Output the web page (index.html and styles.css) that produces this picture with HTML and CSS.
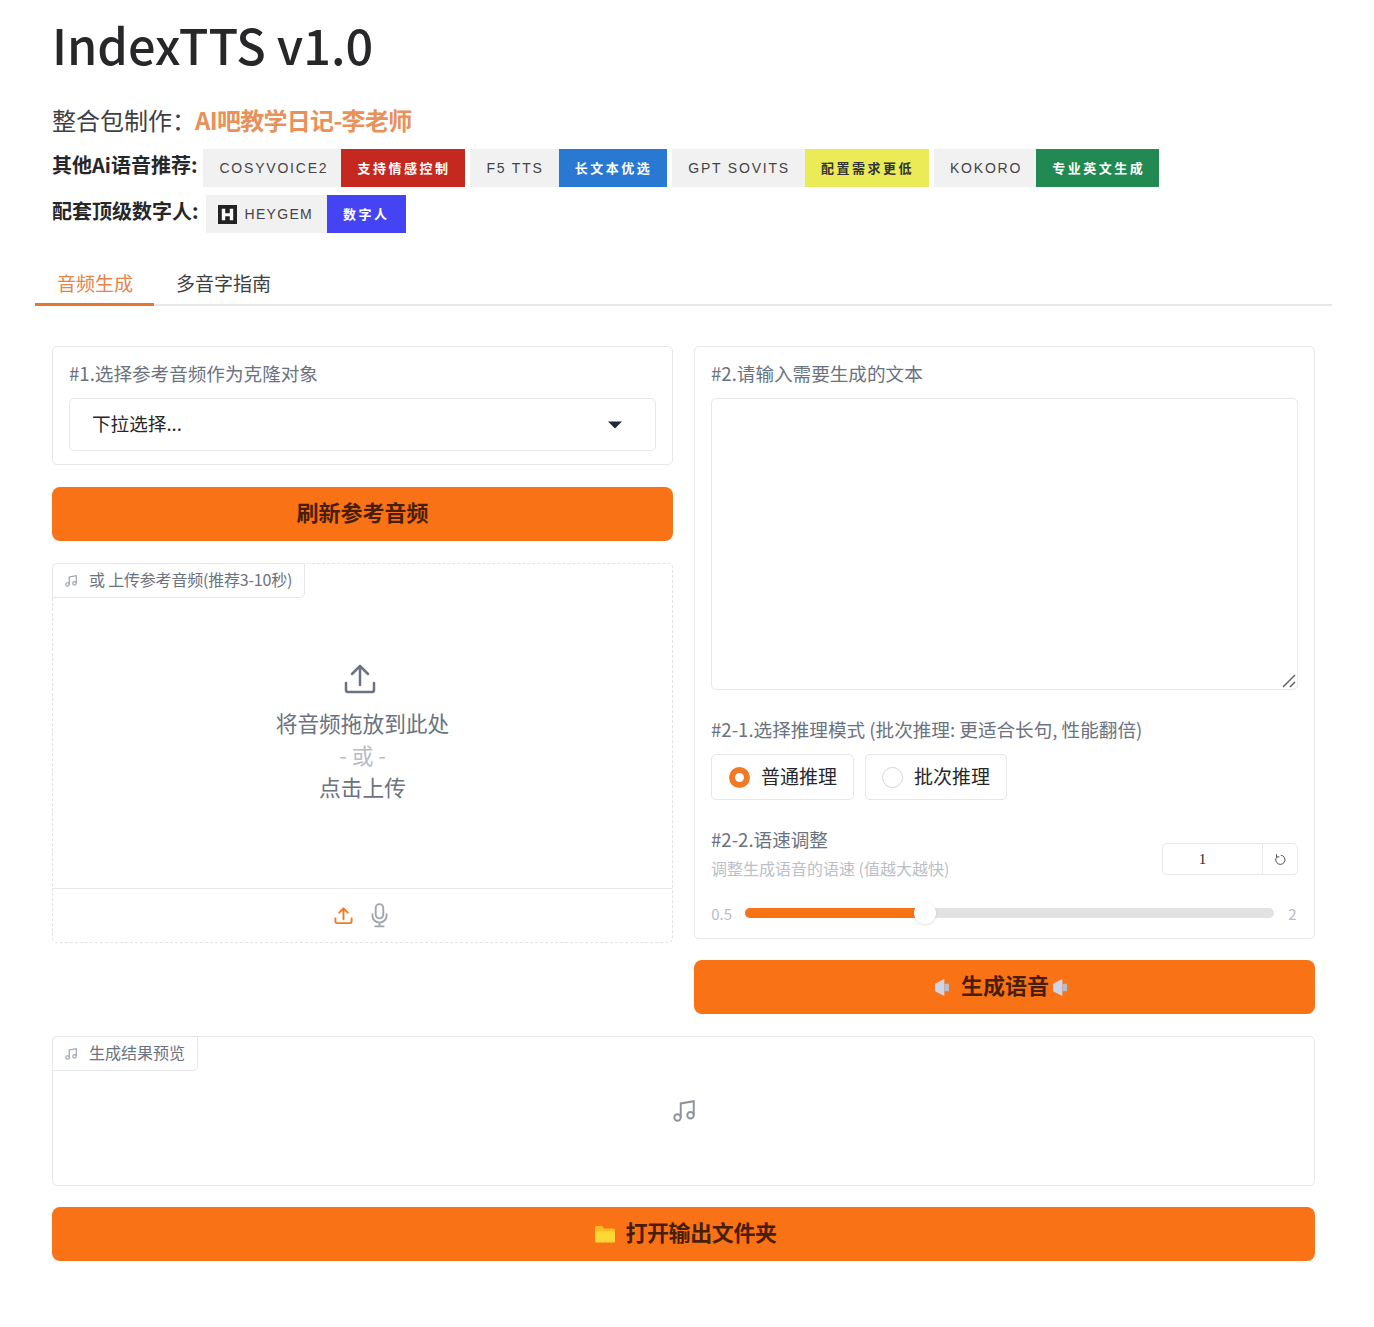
FILE: index.html
```html
<!DOCTYPE html>
<html lang="en">
<head>
  <meta charset="UTF-8">
  <title>IndexTTS v1.0</title>
  <link rel="stylesheet" href="styles.css">
</head>
<body>
  <div id="app">
    <!-- Header -->
    <header class="intro">
      <h1>IndexTTS v1.0</h1>
      <div class="maker">整合包制作：<b>AI吧教学日记-李老师</b></div>
      <div class="badge-row row-one">
        <strong>其他Ai语音推荐:</strong>
        <span class="badge"><span class="badge-name name-cosy">COSYVOICE2</span><span class="badge-tag tag-red">支持情感控制</span></span>
        <span class="badge"><span class="badge-name name-wide">F5 TTS</span><span class="badge-tag tag-blue">长文本优选</span></span>
        <span class="badge"><span class="badge-name name-wide">GPT SOVITS</span><span class="badge-tag tag-yellow">配置需求更低</span></span>
        <span class="badge"><span class="badge-name">KOKORO</span><span class="badge-tag tag-green">专业英文生成</span></span>
      </div>
      <div class="badge-row row-two">
        <strong>配套顶级数字人:</strong>
        <span class="badge">
          <span class="badge-name has-logo">
            <svg class="logo" viewBox="0 0 20 20"><path fill="#222" d="M0 0h20v20H0z"/><path fill="#fff" d="M4 4h3.600v4.600h4.800V4H16v12h-3.600v-4.200H7.600V16H4z"/></svg>
            HEYGEM
          </span>
          <span class="badge-tag tag-indigo">数字人</span>
        </span>
      </div>
    </header>

    <!-- Tabs -->
    <nav class="tabs">
      <a class="tab active">音频生成</a>
      <a class="tab">多音字指南</a>
    </nav>

    <main class="content">
      <div class="columns">
        <section class="col">
          <div class="panel select-panel">
            <label class="field-label">#1.选择参考音频作为克隆对象</label>
            <div class="select-box">
              <span>下拉选择...</span>
              <svg class="caret" viewBox="0 0 14 8"><path fill="#1f2937" d="M0 .5h14L7 7.500z"/></svg>
            </div>
          </div>

          <button class="primary-btn">刷新参考音频</button>

          <div class="upload">
            <div class="block-tag upload-tag">
              <svg class="tag-icon" viewBox="0 0 24 24"><path d="M9 18V5l12-2v13"/><circle cx="6" cy="18" r="3"/><circle cx="18" cy="16" r="3"/></svg>
              或 上传参考音频(推荐3-10秒)
            </div>
            <div class="drop-area">
              <svg class="drop-icon" viewBox="0 0 32 32"><path d="M16 22V4M8 11l8-8 8 8M2 20v7a2 2 0 0 0 2 2h24a2 2 0 0 0 2-2v-7"/></svg>
              <div class="drop-line">将音频拖放到此处</div>
              <div class="drop-or">- 或 -</div>
              <div class="drop-line">点击上传</div>
            </div>
            <div class="source-bar">
              <svg class="src-icon upload-src" viewBox="0 0 20 20"><path d="M10 14V2.500M5.500 7L10 2.500 14.500 7M1.500 13v3.500a1.500 1.500 0 0 0 1.500 1.500h14a1.500 1.500 0 0 0 1.500-1.500V13"/></svg>
              <svg class="src-icon mic-src" viewBox="0 0 18 26"><rect x="5" y="1" width="8" height="15" rx="4"/><path d="M1.500 11.500v1.500a7.500 7.500 0 0 0 15 0v-1.500M9 20.500V24.500M4.500 24.500h9"/></svg>
            </div>
          </div>
        </section>

        <section class="col">
          <div class="panel text-panel">
            <label class="field-label">#2.请输入需要生成的文本</label>
            <div class="text-wrap">
              <textarea class="text-input"></textarea>
              <svg class="grip" viewBox="0 0 14 14"><path d="M1 13L13 1M8 13l5-5"/></svg>
            </div>

            <label class="field-label mode-label">#2-1.选择推理模式 (批次推理: 更适合长句, 性能翻倍)</label>
            <div class="radios">
              <label class="radio checked"><i></i>普通推理</label>
              <label class="radio"><i></i>批次推理</label>
            </div>

            <div class="speed-head">
              <div>
                <div class="speed-title">#2-2.语速调整</div>
                <div class="speed-info">调整生成语音的语速 (值越大越快)</div>
              </div>
              <div class="number-box">
                <span class="number-value">1</span>
                <span class="number-reset">
                  <svg viewBox="0 0 13 13"><path d="M6.800 2.200A4.600 4.600 0 1 1 2.700 4M2.500 1.200L2.700 4l2.700-.2"/></svg>
                </span>
              </div>
            </div>

            <div class="slider-row">
              <span class="min">0.5</span>
              <div class="track">
                <div class="fill" style="width: 34%"></div>
                <div class="thumb" style="left: 34%"></div>
              </div>
              <span class="max">2</span>
            </div>
          </div>

          <button class="primary-btn speak-btn">
            <svg class="speaker speaker-left" viewBox="0 0 15 18"><path d="M0 5l10-5v18L0 13z"/><path class="speaker-back" d="M10 5h5v8h-5z"/></svg>
            生成语音
            <svg class="speaker speaker-right" viewBox="0 0 15 18"><path d="M0 5l10-5v18L0 13z"/><path class="speaker-back" d="M10 5h5v8h-5z"/></svg>
          </button>
        </section>
      </div>

      <div class="result">
        <div class="block-tag">
          <svg class="tag-icon" viewBox="0 0 24 24"><path d="M9 18V5l12-2v13"/><circle cx="6" cy="18" r="3"/><circle cx="18" cy="16" r="3"/></svg>
          生成结果预览
        </div>
        <svg class="result-icon" viewBox="0 0 24 24"><path d="M9 18V5l12-2v13"/><circle cx="6" cy="18" r="3"/><circle cx="18" cy="16" r="3"/></svg>
      </div>

      <button class="primary-btn folder-btn">
        <svg class="folder" viewBox="0 0 22 18"><path fill="#fbbf24" d="M1 2.500A1.500 1.500 0 0 1 2.500 1h5.200l2.300 2.500h9.500A1.500 1.500 0 0 1 21 5v4H1z"/><path fill="#fdd835" d="M1 6.500h20V16a1.500 1.500 0 0 1-1.500 1.500h-17A1.500 1.500 0 0 1 1 16z"/></svg>
        打开输出文件夹
      </button>
    </main>
  </div>
</body>
</html>
```

FILE: styles.css
```css
* {
  box-sizing: border-box;
}

body {
  margin: 0;
  background: #fff;
  font-family: "Noto Sans CJK SC", "Noto Sans", sans-serif;
  color: #27272a;
}

#app {
  width: 1297px;
  margin-left: 35px;
  padding-bottom: 66px;
}

/* header */
.intro {
  padding: 0 17px;
}

h1 {
  margin: 0;
  padding-top: 12px;
  font-size: 48.6px;
  line-height: 64px;
  font-weight: 500;
  color: #27272a;
}

.maker {
  margin-top: 22px;
  height: 44px;
  font-size: 24px;
  line-height: 44px;
  color: #3f3f46;
}

.maker b {
  margin-left: -1px;
  color: #e8915a;
  font-weight: 700;
  letter-spacing: -0.7px;
}

.badge-row {
  display: flex;
  align-items: flex-start;
  height: 38px;
}

.badge-row strong {
  font-size: 20px;
  line-height: 32px;
  color: #27272a;
}

.row-one {
  margin-top: 7px;
  gap: 5px;
}

.row-one strong {
  margin-right: 1px;
}

.row-two {
  margin-top: 8px;
  gap: 5px;
}

.row-two strong {
  margin-right: 2px;
}

.badge {
  display: flex;
  height: 38px;
  font-size: 13px;
  line-height: 38px;
  letter-spacing: 2.5px;
}

.badge-name {
  padding: 0 14px 0 16px;
  background: #f1f1f1;
  color: #444;
  font-family: "Liberation Sans", sans-serif;
  font-size: 14px;
  letter-spacing: 1.8px;
  white-space: nowrap;
}

.name-cosy {
  padding-right: 13px;
}

.name-wide {
  padding-right: 15px;
}

.has-logo {
  display: flex;
  align-items: center;
  gap: 8px;
  padding-left: 12px;
  letter-spacing: 1.3px;
}

.logo {
  width: 19px;
  height: 19px;
}

.badge-tag {
  padding: 0 15px 0 16px;
  font-weight: 700;
  color: #fff;
  white-space: nowrap;
}

.tag-red { background: #c5281f; }
.tag-blue { background: #2979d2; }
.tag-yellow { background: #eaeb56; color: #333; }
.tag-green { background: #218a52; padding-right: 14px; }
.tag-indigo { background: #4444f4; padding-right: 16px; }

/* tabs */
.tabs {
  display: flex;
  margin-top: 27px;
  height: 46px;
  border-bottom: 2px solid #e5e7eb;
}

.tab {
  padding: 0 22px;
  font-size: 19px;
  line-height: 46px;
  color: #3f3f46;
}

.tab.active {
  height: 46px;
  padding: 0 21px 0 22px;
  color: #e8834a;
  border-bottom: 3px solid #e8772e;
}

/* main */
.content {
  padding: 40px 17px 0;
}

.columns {
  display: grid;
  grid-template-columns: 621px 621px;
  gap: 21px;
}

.col {
  display: flex;
  flex-direction: column;
  gap: 22px;
}

.panel {
  padding: 12px 16px 13px;
  background: #fff;
  border: 1px solid #e5e7eb;
  border-radius: 5px;
}

.field-label {
  display: block;
  font-size: 18.6px;
  line-height: 28px;
  color: #6b7280;
}

.select-box {
  display: flex;
  align-items: center;
  justify-content: space-between;
  height: 53px;
  margin-top: 11px;
  padding: 0 33px 5px 22px;
  border: 1px solid #e5e7eb;
  border-radius: 5px;
  font-size: 18.6px;
  color: #27272a;
}

.caret {
  width: 14px;
  height: 8px;
  margin-top: 5px;
}

.primary-btn {
  display: flex;
  align-items: center;
  justify-content: center;
  width: 100%;
  height: 54px;
  padding: 0 0 6px;
  border: 0;
  border-radius: 8px;
  background: #f97316;
  font-family: inherit;
  font-size: 22px;
  font-weight: 700;
  color: #4a1e06;
}

/* upload */
.upload {
  position: relative;
  height: 380px;
  border: 1px dashed #e0e2e6;
  border-radius: 5px;
  display: flex;
  flex-direction: column;
}

.block-tag {
  position: absolute;
  top: -1px;
  left: -1px;
  display: flex;
  align-items: center;
  gap: 11px;
  height: 35px;
  padding: 0 12px 3px 11px;
  background: #fff;
  border: 1px solid #e5e7eb;
  border-radius: 5px 0 5px 0;
  font-size: 16px;
  color: #6b7280;
}

.upload-tag {
  letter-spacing: -0.2px;
}

.tag-icon {
  width: 14px;
  height: 14px;
  margin-top: 3px;
  fill: none;
  stroke: #9ca3af;
  stroke-width: 2;
}

.drop-area {
  flex: 1;
  display: flex;
  flex-direction: column;
  align-items: center;
  padding-top: 99px;
  font-size: 21.7px;
  line-height: 32px;
  color: #6b7280;
}

.drop-icon {
  width: 32px;
  height: 32px;
  margin: 0 5px 12px 0;
  fill: none;
  stroke: #6b7280;
  stroke-width: 2.500;
  stroke-linecap: round;
  stroke-linejoin: round;
}

.drop-or {
  color: #b8bcc4;
}

.source-bar {
  display: flex;
  align-items: center;
  justify-content: center;
  gap: 18px;
  height: 54px;
  padding-right: 4px;
  border-top: 1px solid #e5e7eb;
}

.src-icon {
  fill: none;
  stroke-width: 2;
  stroke-linecap: round;
  stroke-linejoin: round;
}

.upload-src {
  width: 19px;
  height: 19px;
  stroke: #f07a26;
}

.mic-src {
  width: 17px;
  height: 25px;
  stroke: #a1a5ad;
}

/* text column */
.text-wrap {
  position: relative;
  margin-top: 11px;
}

.text-input {
  display: block;
  width: 100%;
  height: 292px;
  border: 1px solid #e5e7eb;
  border-radius: 5px;
  outline: none;
  resize: none;
}

.grip {
  position: absolute;
  right: 2px;
  bottom: 2px;
  width: 14px;
  height: 14px;
  fill: none;
  stroke: #666;
  stroke-width: 1.5;
}

.mode-label {
  margin-top: 25px;
}

.radios {
  display: flex;
  gap: 11px;
  margin-top: 11px;
}

.radio {
  display: flex;
  align-items: center;
  gap: 11px;
  height: 46px;
  padding: 0 16px 3px 16px;
  border: 1px solid #e5e7eb;
  border-radius: 5px;
  font-size: 19px;
  color: #27272a;
}

.radio.checked {
  padding-left: 17px;
}

.radio i {
  width: 21px;
  height: 21px;
  margin-top: 3px;
  border: 1px solid #d4d4d8;
  border-radius: 50%;
  background: #fff;
}

.radio.checked i {
  border: 6px solid #f07a26;
}

.speed-head {
  display: flex;
  align-items: center;
  justify-content: space-between;
  margin-top: 26px;
}

.speed-title {
  margin-bottom: 2px;
  font-size: 18.6px;
  line-height: 26px;
  color: #6b7280;
}

.speed-info {
  font-size: 16px;
  line-height: 28px;
  color: #bcc0c6;
}

.number-box {
  display: flex;
  width: 136px;
  height: 32px;
  margin-top: 10px;
  border: 1px solid #e5e7eb;
  border-radius: 5px;
  line-height: 30px;
}

.number-value {
  flex: 1;
  padding-right: 20px;
  text-align: center;
  font-family: "Liberation Serif", serif;
  font-size: 15px;
  color: #27272a;
}

.number-reset {
  display: flex;
  align-items: center;
  justify-content: center;
  width: 35px;
  border-left: 1px solid #e5e7eb;
}

.number-reset svg {
  width: 13px;
  height: 13px;
  fill: none;
  stroke: #52525b;
  stroke-width: 1;
}

.slider-row {
  display: flex;
  align-items: center;
  gap: 13px;
  margin-top: 12px;
  height: 38px;
  font-size: 15px;
  color: #b8bcc4;
}

.slider-row .min {
  width: 21px;
  text-align: right;
}

.slider-row .max {
  width: 11px;
  text-align: center;
}

.text-panel {
  padding-bottom: 6px;
}

.track {
  position: relative;
  flex: 1;
  height: 10px;
  border-radius: 5px;
  background: #e2e2e2;
}

.fill {
  height: 10px;
  border-radius: 5px;
  background: #f97316;
}

.thumb {
  position: absolute;
  top: -6px;
  width: 22px;
  height: 22px;
  margin-left: -11px;
  border-radius: 50%;
  background: #fff;
  box-shadow: 0 1px 3px rgba(0, 0, 0, 0.12);
}

.speak-btn {
  margin-top: -1px;
  padding-right: 7px;
}

.speaker {
  flex: none;
  width: 14px;
  height: 17px;
  margin-top: 6px;
  fill: #d0d4e4;
}

.speaker-left {
  margin-right: 12px;
}

.speaker-right {
  margin-left: 4px;
}

.speaker-back {
  fill: #b9bccb;
}

/* result */
.result {
  position: relative;
  display: flex;
  align-items: center;
  justify-content: center;
  height: 150px;
  margin-top: 22px;
  border: 1px solid #e5e7eb;
  border-radius: 5px;
}

.result-icon {
  width: 26px;
  height: 26px;
  fill: none;
  stroke: #8f949c;
  stroke-width: 1.800;
}

.folder-btn {
  margin-top: 21px;
  gap: 9px;
  padding-left: 4px;
  letter-spacing: -0.4px;
}

.folder {
  width: 22px;
  height: 18px;
  margin-top: 6px;
}
```
